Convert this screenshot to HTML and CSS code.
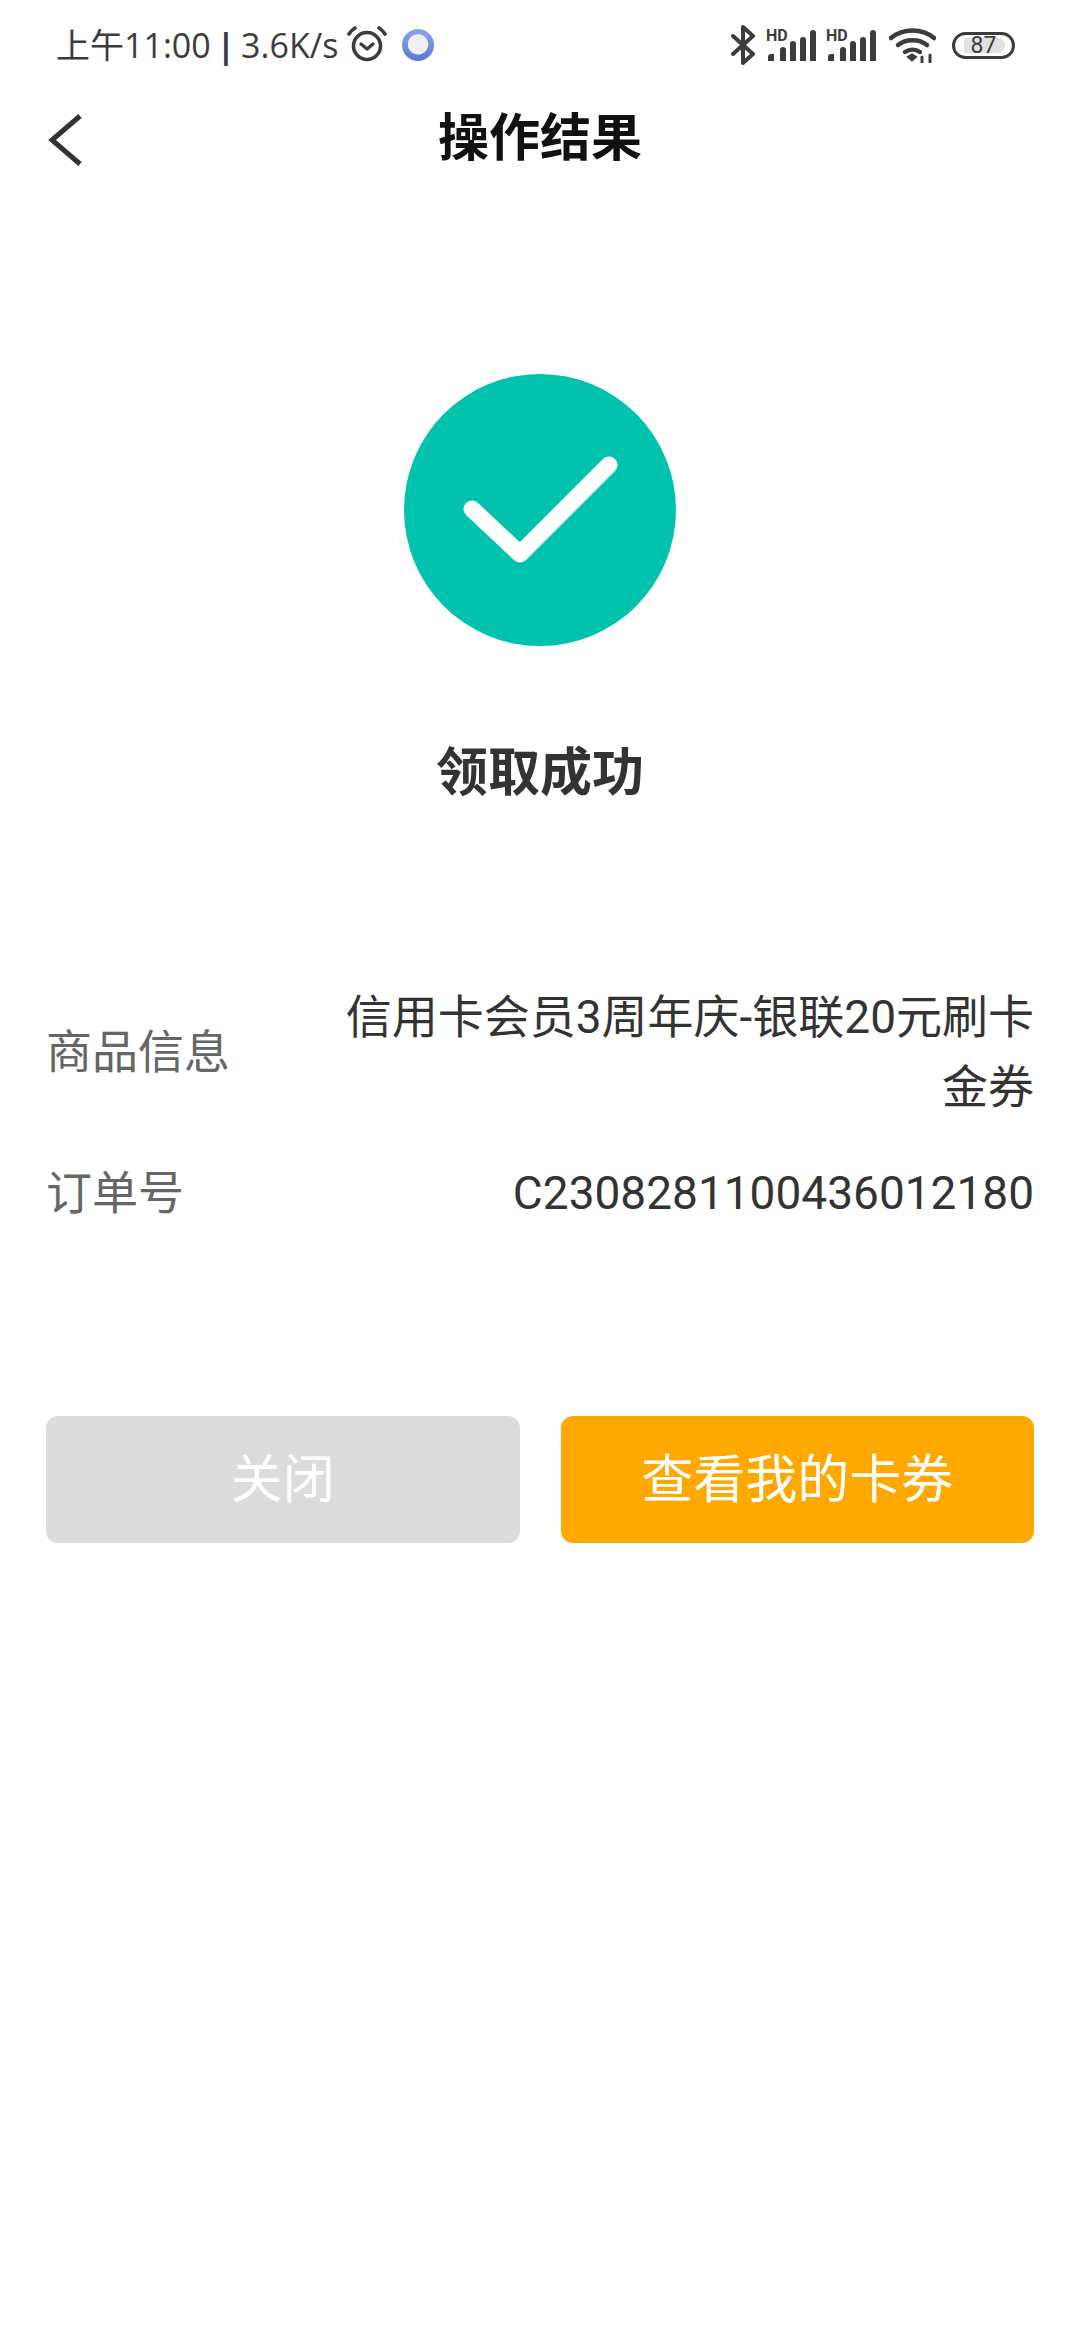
FILE: index.html
```html
<!DOCTYPE html>
<html lang="zh-CN">
<head>
<meta charset="utf-8">
<title>操作结果</title>
<link rel="stylesheet" href="styles.css">
</head>
<body>
<div class="page">
  <div class="status">
    <div class="status-left">
      <span class="status-text">上午11:00 <b class="bar">|</b> 3.6K/s</span>
      <svg class="alarm" width="40" height="38" viewBox="0 0 40 38" fill="none" stroke="#3c3c3c" stroke-linecap="round" stroke-linejoin="round">
        <circle cx="20" cy="21" r="13.5" stroke-width="3.6"/>
        <path d="M14 19l6 5 6-5" stroke-width="3.4"/>
        <path d="M2 9c1.500-2.500 3.500-4.500 6-6M38 9c-1.500-2.500-3.500-4.500-6-6" stroke-width="3.6"/>
      </svg>
      <span class="msg-dot"></span>
    </div>
    <div class="status-right">
      <svg class="bt" width="24" height="40" viewBox="0 0 24 40" fill="none" stroke="#3c3c3c" stroke-width="4" stroke-linecap="round" stroke-linejoin="round"><path d="M2 11l20 18-10 9V2l10 9L2 29"/></svg>
      <svg class="signal" width="50" height="38" viewBox="0 -6 50 38" fill="#3c3c3c">
        <text x="0" y="12" class="hd">HD</text>
        <path d="M2 32v-4a3 3 0 0 1 3-3h3v7zM14 32V21a3 3 0 0 1 6 0v11zM24 32V15a3 3 0 0 1 6 0v17zM34 32V11a3 3 0 0 1 6 0v21zM44 32V4a3 3 0 0 1 6 0v28z"/>
      </svg>
      <svg class="signal" width="50" height="38" viewBox="0 -6 50 38" fill="#3c3c3c">
        <text x="0" y="12" class="hd">HD</text>
        <path d="M2 32v-4a3 3 0 0 1 3-3h3v7zM14 32V21a3 3 0 0 1 6 0v11zM24 32V15a3 3 0 0 1 6 0v17zM34 32V11a3 3 0 0 1 6 0v21zM44 32V4a3 3 0 0 1 6 0v28z"/>
      </svg>
      <svg class="wifi" width="47" height="35" viewBox="0 0 47 35" fill="none" stroke="#3c3c3c" stroke-width="4.500" stroke-linecap="round">
        <path d="M2 10c12-10 31-10 43 0"/>
        <path d="M9 17c8-6.500 21-6.500 29 0"/>
        <path d="M16 24c4.500-3 10.500-3 15 0"/>
        <path d="M19 29l4 3.500 4-3.500-4-2.500z" fill="#3c3c3c" stroke-width="2"/>
        <path d="M33 34v-5M41 34v-7" stroke-width="3"/>
      </svg>
      <div class="battery"><span class="battery-fill"></span><span class="battery-num">87</span></div>
    </div>
  </div>

  <header class="nav">
    <svg class="back" width="34" height="52" viewBox="0 0 34 52" fill="none" stroke="#333" stroke-width="5"><path d="M32 2L4 26l28 24"/></svg>
    <h1 class="nav-title">操作结果</h1>
  </header>

  <section class="result">
    <svg class="tick" width="272" height="272" viewBox="0 0 272 272">
      <circle cx="136" cy="136" r="136" fill="#00c2ad"/>
      <path d="M68 135l48 45 89-89" fill="none" stroke="#fff" stroke-width="17" stroke-linecap="round" stroke-linejoin="round"/>
    </svg>
    <h2 class="result-title">领取成功</h2>
  </section>

  <section class="info">
    <div class="row">
      <div class="label">商品信息</div>
      <div class="value">信用卡会员3周年庆-银联20元刷卡金券</div>
    </div>
    <div class="row">
      <div class="label">订单号</div>
      <div class="value">C2308281100436012180</div>
    </div>
  </section>

  <div class="actions">
    <button class="btn btn-close">关闭</button>
    <button class="btn btn-view">查看我的卡券</button>
  </div>
</div>
</body>
</html>
```
FILE: styles.css
```css
* { box-sizing: border-box; }
html, body { margin: 0; padding: 0; background: #fff; }
body { font-family: Roboto, "Noto Sans CJK SC", sans-serif; }
.page { width: 1080px; height: 2340px; overflow: hidden; background: #fff; }

.status { height: 90px; padding: 0 65px 0 56px; display: flex; justify-content: space-between; align-items: center; color: #3c3c3c; }
.status-left { display: flex; align-items: center; }
.status-text { font-family: "Open Sans", "Noto Sans CJK SC", sans-serif; font-size: 34px; line-height: 40px; white-space: nowrap; width: 291px; word-spacing: -3px; }
.bar { font-weight: 700; }
.alarm { margin-top: -2px; }
.msg-dot { width: 32px; height: 32px; margin-left: 15px; border-radius: 50%; background: radial-gradient(circle at 50% 48%, #eef0f2 0 42%, transparent 46%), linear-gradient(#8ca6ec, #5a78cf); }
.status-right { display: flex; align-items: center; gap: 10px; }
.hd { font-family: Roboto, sans-serif; font-size: 16px; font-weight: 700; }
.signal { margin-top: -6px; }
.bt { margin-right: 1px; }
.wifi { margin-left: 3px; }
.battery { position: relative; width: 63px; height: 27px; margin-left: 6px; border: 3px solid #3c3c3c; border-radius: 14px; padding: 3px 7px 3px 9px; }
.battery-fill { display: block; height: 100%; width: 100%; background: #e2e2e2; border-radius: 0 8px 8px 0; }
.battery-num { position: absolute; inset: 0; text-align: center; font-size: 23px; line-height: 21px; color: #3c3c3c; }

.nav { height: 98px; position: relative; display: flex; align-items: center; justify-content: center; }
.back { position: absolute; left: 48px; top: 24px; }
.nav-title { margin: 0; font-size: 51px; line-height: 98px; font-weight: 700; color: #111; }

.result { display: flex; flex-direction: column; align-items: center; padding-top: 186px; }
.tick { display: block; }
.result-title { margin: 90px 0 0; font-size: 52px; line-height: 76px; font-weight: 700; color: #333; }

.info { padding: 170px 46px 0; display: flex; flex-direction: column; gap: 36px; }
.row { display: flex; align-items: center; justify-content: space-between; font-size: 46px; line-height: 70px; }
.label { flex: none; width: 280px; color: #666; }
.value { flex: 1; text-align: right; color: #333; }

.actions { padding: 188px 46px 0; display: flex; gap: 41px; }
.btn { flex: 1; height: 127px; border: 0; border-radius: 12px; color: #fff; font-family: inherit; font-size: 52px; padding: 0 0 8px; }
.btn-close { background: #dcdcdc; }
.btn-view { background: #ffa900; }
```
